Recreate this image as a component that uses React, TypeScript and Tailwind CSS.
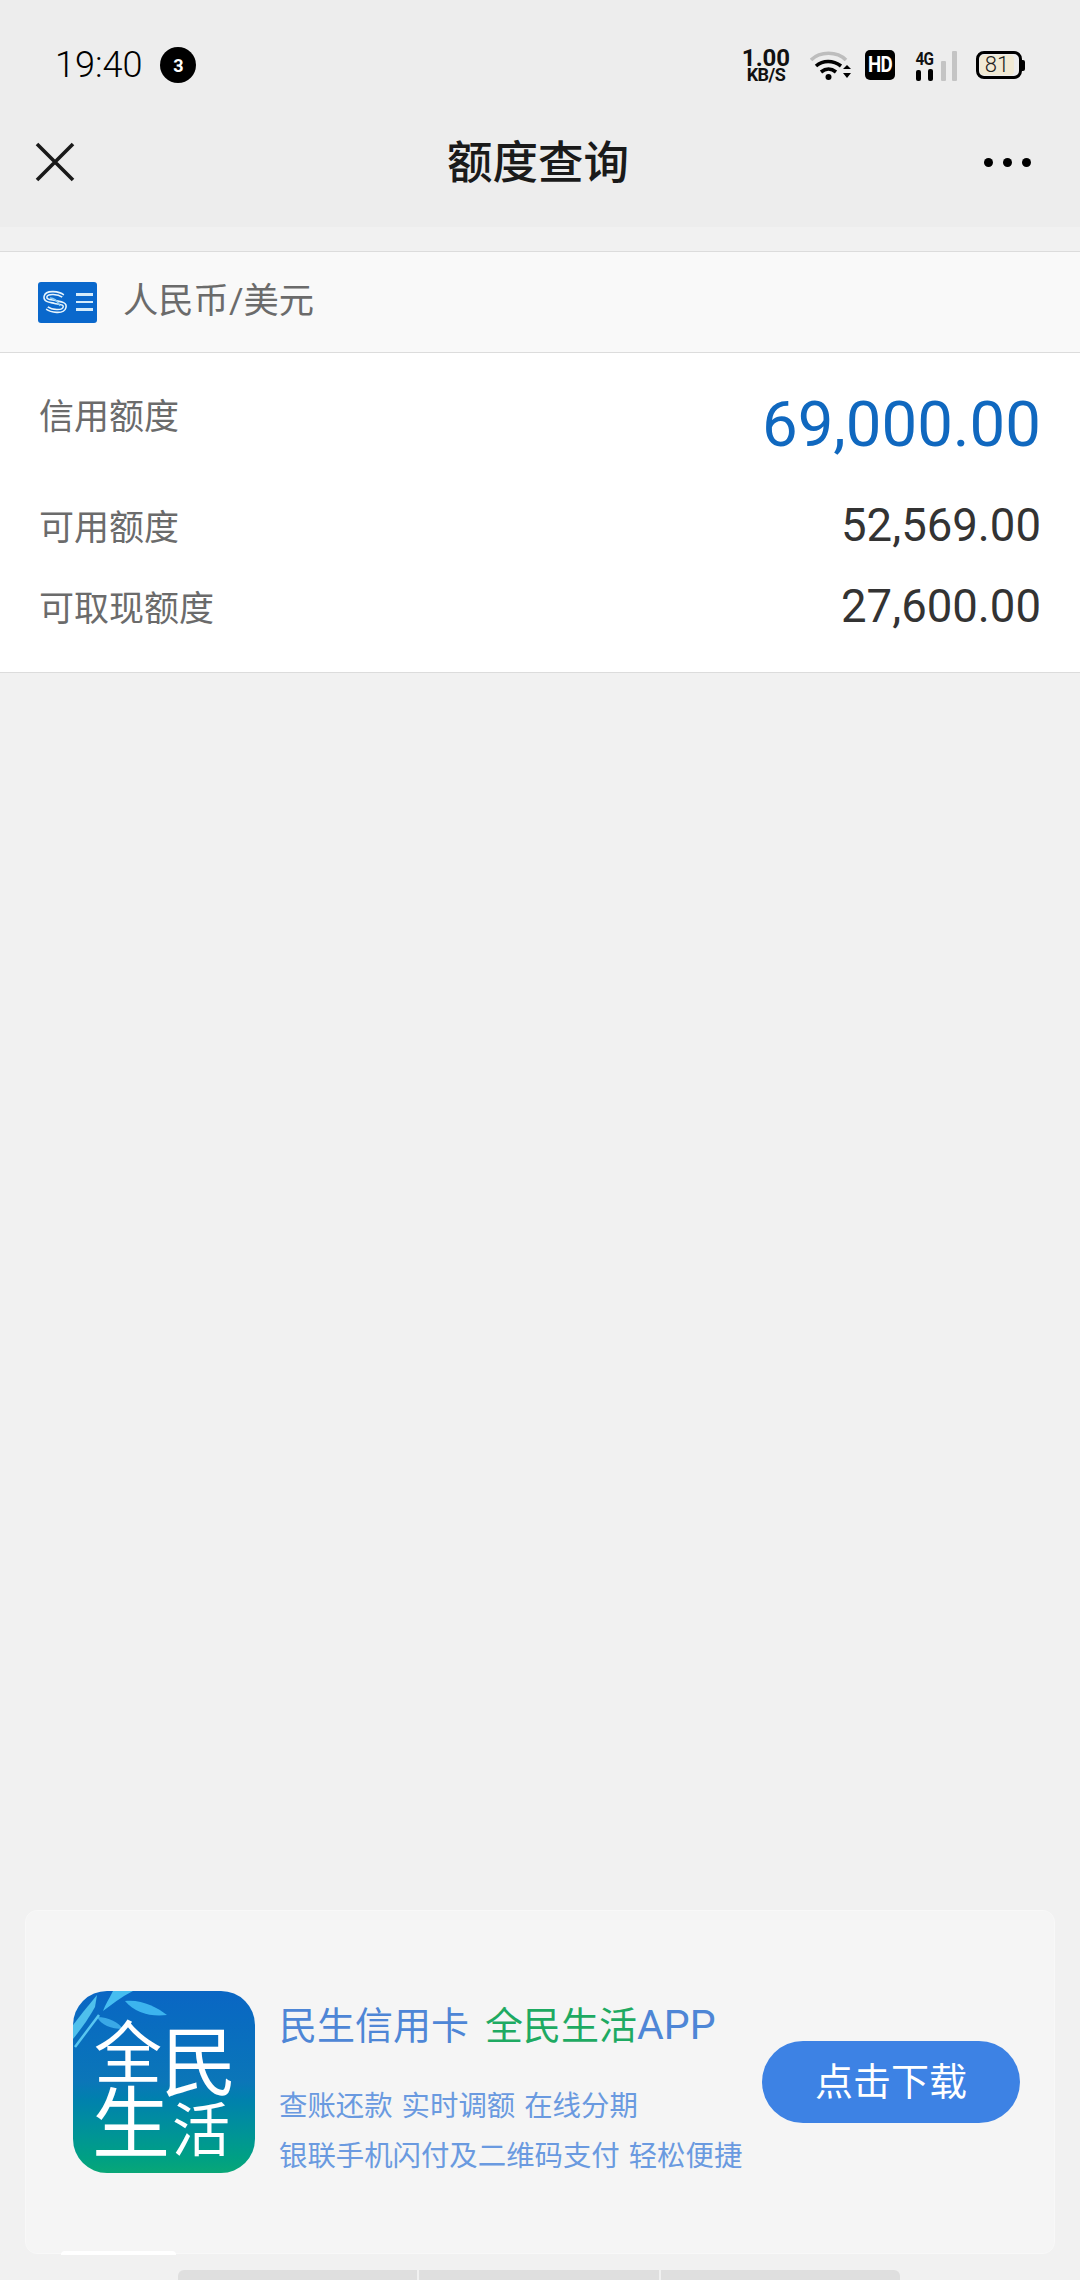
const sans = 'font-["Roboto","Noto_Sans_CJK_SC",sans-serif]';

function StatusIcons() {
  return (
    <div className="flex items-center">
      <div className="flex w-[48px] flex-col items-center font-bold text-[#111]">
        <span className="text-[24px] leading-[19px]">1.00</span>
        <span className="text-[18px] leading-[14px] tracking-[-0.5px]">KB/S</span>
      </div>
      <svg className="ml-[20px]" width="41" height="31" viewBox="0 0 41 31">
        <path d="M1 10 C10 1 27 1 36 10" fill="none" stroke="#bdbdbd" strokeWidth="3.6" />
        <path d="M6 16 C13 10 23 10 31 16" fill="none" stroke="#000" strokeWidth="3.6" />
        <path d="M11 22 C16 18 21 18 26 22" fill="none" stroke="#000" strokeWidth="3.6" />
        <circle cx="18.5" cy="27" r="3" fill="#000" />
        <path d="M33 19 L37 15 L41 19 Z M33 23 L41 23 L37 28 Z" fill="#000" />
      </svg>
      <div className="ml-[14px] flex h-[30px] w-[30px] items-center justify-center rounded-[5px] bg-black text-white">
        <span className="text-[22px] font-bold leading-none tracking-[-1px] [transform:scaleX(0.85)]">HD</span>
      </div>
      <div className="ml-[18px] flex h-[31px] items-end">
        <div className="flex w-[23px] flex-col items-center">
          <span className="text-[18px] font-bold leading-[15px] tracking-[-1px] text-[#111] [transform:scaleX(0.85)]">4G</span>
          <div className="mt-[3px] flex items-end gap-[7px]">
            <div className="h-[11px] w-[5px] rounded-[2px] bg-black" />
            <div className="h-[12px] w-[5px] rounded-[2px] bg-black" />
          </div>
        </div>
        <div className="ml-[5px] h-[20px] w-[5px] rounded-[1px] bg-[#c4c4c4]" />
        <div className="ml-[6px] h-[30px] w-[5px] rounded-[1px] bg-[#c4c4c4]" />
      </div>
      <div className="ml-[19px] flex items-center">
        <div className="flex h-[28px] w-[46px] items-center rounded-[8px] border-[3px] border-black px-[1px]">
          <div className="flex h-[20px] w-[34px] items-center justify-center rounded-[4px] bg-[#f1ead4] text-[22px] font-light leading-none text-[#222]">
            81
          </div>
        </div>
        <div className="h-[11px] w-[3px] rounded-r-[2px] bg-black" />
      </div>
    </div>
  );
}

function CardLogo() {
  return (
    <div className="flex h-[41px] w-[59px] items-center justify-between rounded-[3px] bg-[#0a68cc] pl-[4px] pr-[4px]">
      <svg width="26" height="24" viewBox="0 0 26 24">
        <path
          d="M21 6 C17 3 5 1 3.5 6.5 C2.5 11 9 11 13 12 C17 13 24 13 22.5 17.5 C21 23 9 21 5 18"
          fill="none"
          stroke="#e8f5fd"
          strokeWidth="4.4"
        />
        <path
          d="M21 6 C17 3 5 1 3.5 6.5 C2.5 11 9 11 13 12 C17 13 24 13 22.5 17.5 C21 23 9 21 5 18"
          fill="none"
          stroke="#0a68cc"
          strokeWidth="1.3"
        />
        <path d="M8 8 C12 8 16 12 18 16" fill="none" stroke="#8ccdf5" strokeWidth="1.4" />
      </svg>
      <div className="flex flex-col gap-[5px]">
        <div className="h-[2.5px] w-[17px] bg-[#d5ecfb]" />
        <div className="h-[2.5px] w-[17px] bg-[#d5ecfb]" />
        <div className="h-[2.5px] w-[17px] bg-[#d5ecfb]" />
      </div>
    </div>
  );
}

function AppLogo() {
  return (
    <div className="relative h-[182px] w-[182px] shrink-0 overflow-hidden rounded-[34px] bg-gradient-to-b from-[#0a66c4] via-[#0b76b8] to-[#09a777] font-['Noto_Sans_CJK_SC',sans-serif] leading-none text-white">
      <svg className="absolute left-0 top-0" width="100" height="60" viewBox="0 0 100 60">
        <path d="M52 10 C68 8 84 16 94 24 C78 26 62 22 52 10 Z" fill="#3cb4ee" />
        <path d="M24 26 C36 26 46 32 50 38 C38 38 28 34 24 26 Z" fill="#3aa8e6" />
        <path d="M30 20 C38 14 48 6 60 0 L40 0 C36 8 32 14 30 20 Z" fill="#46bdf0" />
        <path d="M0 48 C8 38 14 30 22 16 L24 4 C14 16 6 26 0 34 Z" fill="#4fc0ec" />
        <path d="M2 56 L26 24" stroke="#58c6f0" strokeWidth="2.5" />
      </svg>
      <span className="absolute left-[21px] top-[24px] text-[68px]">全</span>
      <span className="absolute left-[88px] top-[28px] text-[76px]">民</span>
      <span className="absolute left-[19px] top-[88px] text-[78px]">生</span>
      <span className="absolute left-[99px] top-[106px] text-[58px]">活</span>
    </div>
  );
}

function Row({ label, value, className }: { label: string; value: string; className: string }) {
  return (
    <div className={`flex items-center justify-between ${className}`}>
      <span className="relative top-[3px] text-[35px] leading-none text-[#6b6b6b]">{label}</span>
      <span className="text-[45.5px] leading-none text-[#333]">{value}</span>
    </div>
  );
}

export default function App() {
  return (
    <div className={`flex h-[2280px] w-[1080px] flex-col overflow-hidden bg-[#f1f1f1] ${sans}`}>
      <div className="h-[227px] shrink-0 bg-[#ededed]">
        <div className="flex items-center justify-between pl-[55px] pr-[55px] pt-[45px]">
          <div className="flex items-center">
            <span className="text-[36px] font-light leading-[40px] text-black">19:40</span>
            <span className="ml-[18px] flex h-[36px] w-[36px] items-center justify-center rounded-full bg-black text-[18px] font-bold text-white">
              3
            </span>
          </div>
          <StatusIcons />
        </div>
        <div className="mt-[49px] grid h-[56px] grid-cols-[1fr_auto_1fr] items-center pl-[35px] pr-[49px]">
          <svg width="40" height="40" viewBox="0 0 40 40">
            <path d="M2 2 L38 38 M38 2 L2 38" stroke="#1a1a1a" strokeWidth="3.6" />
          </svg>
          <span className="relative left-[5px] top-[2px] text-[45.5px] font-medium leading-none text-[#1a1a1a]">额度查询</span>
          <div className="flex justify-end gap-[10px]">
            <div className="h-[9px] w-[9px] rounded-full bg-black" />
            <div className="h-[9px] w-[9px] rounded-full bg-black" />
            <div className="h-[9px] w-[9px] rounded-full bg-black" />
          </div>
        </div>
      </div>

      <div className="mt-[24px] flex h-[102px] shrink-0 items-center gap-[26px] border-y border-[#dcdcdc] bg-[#f9f9f9] pl-[38px]">
        <CardLogo />
        <span className="text-[35.3px] leading-none text-[#6b6b6b]">人民币/美元</span>
      </div>

      <div className="h-[320px] shrink-0 border-b border-[#dcdcdc] bg-white pl-[39px] pr-[39px]">
        <div className="flex items-start justify-between pt-[47px]">
          <span className="text-[35px] leading-none text-[#6b6b6b]">信用额度</span>
          <span className="mt-[-7px] text-[63.5px] leading-none text-[#1068bf]">69,000.00</span>
        </div>
        <Row label="可用额度" value="52,569.00" className="mt-[46px]" />
        <Row label="可取现额度" value="27,600.00" className="mt-[36px]" />
      </div>

      <div className="flex-1" />

      <div className="relative mx-[25px] flex h-[344px] shrink-0 items-center rounded-[12px] border border-[#f8f8f8] bg-[#f5f5f5] pl-[47px]">
        <AppLogo />
        <div className="ml-[24px] w-[482px] pt-[12px]">
          <div className="whitespace-nowrap text-[38px] leading-none text-[#4e86d6]">
            民生信用卡<span className="ml-[16px] text-[#1eaa62]">全民生活</span>
            <span className="text-[41px]">APP</span>
          </div>
          <div className="mt-[47px] whitespace-nowrap text-[28.4px] leading-none text-[#6a9ae0] [word-spacing:2px]">查账还款 实时调额 在线分期</div>
          <div className="mt-[21px] whitespace-nowrap text-[28.4px] leading-none text-[#6a9ae0] [word-spacing:2px]">银联手机闪付及二维码支付 轻松便捷</div>
        </div>
        <div className="ml-[1px] flex h-[82px] w-[258px] items-center justify-center rounded-full bg-[#3d82e4] text-[38px] leading-none text-white">
          点击下载
        </div>
        <div className="absolute bottom-[-2px] left-[35px] h-[4px] w-[115px] rounded-t-[4px] bg-white" />
      </div>

      <div className="mb-0 ml-[178px] mt-[16px] flex h-[10px] w-[722px] shrink-0 gap-[2px]">
        <div className="flex-1 rounded-tl-[6px] bg-[#dfdfdf]" />
        <div className="flex-1 bg-[#dfdfdf]" />
        <div className="flex-1 rounded-tr-[6px] bg-[#dfdfdf]" />
      </div>
    </div>
  );
}
